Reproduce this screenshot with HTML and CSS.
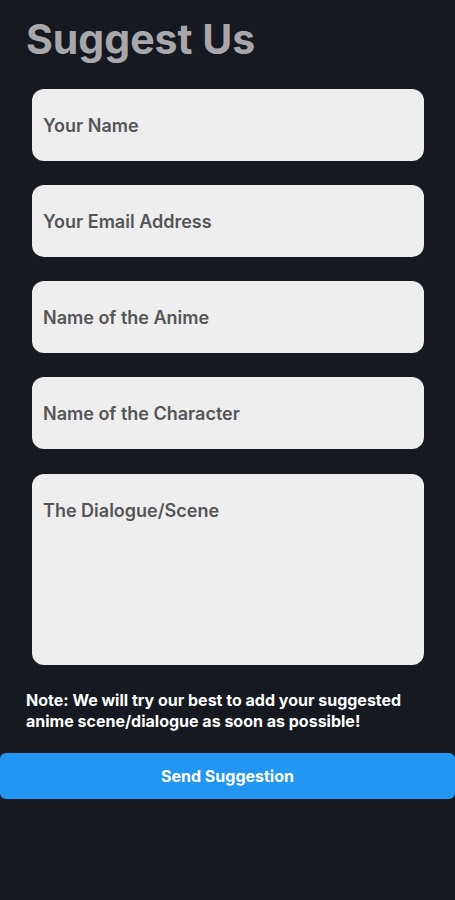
FILE: index.html
```html
<!DOCTYPE html>
<html>
<head>
  <title>Suggest Us</title>
  <link rel="stylesheet" href="styles.css">
</head>
<body>
  <h1 class="title">Suggest Us</h1>
  <form class="form">
    <input class="field" type="text" placeholder="Your Name">
    <input class="field" type="email" placeholder="Your Email Address">
    <input class="field" type="text" placeholder="Name of the Anime">
    <input class="field" type="text" placeholder="Name of the Character">
    <textarea class="field area" placeholder="The Dialogue/Scene"></textarea>
  </form>
  <p class="note">Note: We will try our best to add your suggested anime scene/dialogue as soon as possible!</p>
  <div class="send">Send Suggestion</div>
</body>
</html>
```
FILE: styles.css
```css
body {
  margin: 0;
  background-color: #161920;
  font-family: Inter, "Noto Sans", sans-serif;
  height: 900px;
}

.title {
  margin: 0;
  padding: 15px 0 0 26px;
  font-size: 41px;
  font-weight: 700;
  line-height: 48px;
  letter-spacing: 0;
  color: #a8a8ac;
}

.form {
  display: flex;
  flex-direction: column;
  gap: 24px;
  padding: 26px 31px 0 32px;
}

.field {
  box-sizing: border-box;
  height: 72px;
  border: none;
  border-radius: 12px;
  background-color: #eeeeee;
  padding: 0 11px;
  font-family: Inter, "Noto Sans", sans-serif;
  font-size: 18px;
  font-weight: 600;
  color: #333;
  outline: none;
}

.field::placeholder {
  color: #555558;
}

.area {
  margin-top: 1px;
  height: 191px;
  padding-top: 26px;
  resize: none;
}

.note {
  margin: 25px 30px 0 26px;
  font-size: 16px;
  font-weight: 700;
  line-height: 21px;
  color: #ffffff;
  letter-spacing: 0;
}

.send {
  margin-top: 21px;
  height: 46px;
  line-height: 46px;
  background-color: #2196f3;
  border-radius: 6px;
  text-align: center;
  font-size: 16px;
  font-weight: 700;
  color: #ffffff;
}
```
